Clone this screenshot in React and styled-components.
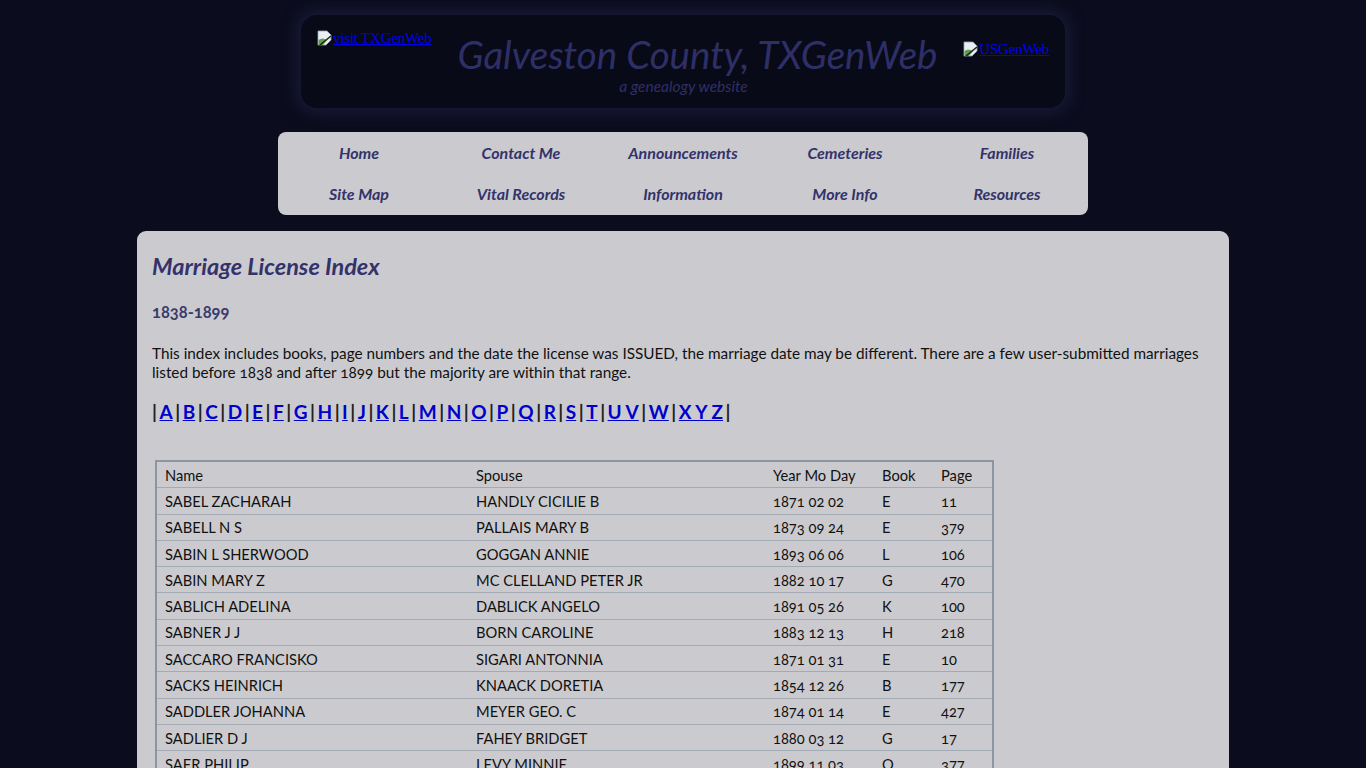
import React from 'react';
import styled, { createGlobalStyle } from 'styled-components';

const GlobalStyle = createGlobalStyle`
  body {
    margin: 0;
    background: #0b0c1d;
    font-family: Lato, "Open Sans", sans-serif;
    font-variant-numeric: oldstyle-nums;
  }
`;

const navItems = [
  'Home', 'Contact Me', 'Announcements', 'Cemeteries', 'Families',
  'Site Map', 'Vital Records', 'Information', 'More Info', 'Resources',
];

const letters = ['A', 'B', 'C', 'D', 'E', 'F', 'G', 'H', 'I', 'J', 'K', 'L', 'M', 'N', 'O', 'P', 'Q', 'R', 'S', 'T', 'U V', 'W', 'X Y Z'];

const rows = [
  ['SABEL ZACHARAH', 'HANDLY CICILIE B', '1871 02 02', 'E', '11'],
  ['SABELL N S', 'PALLAIS MARY B', '1873 09 24', 'E', '379'],
  ['SABIN L SHERWOOD', 'GOGGAN ANNIE', '1893 06 06', 'L', '106'],
  ['SABIN MARY Z', 'MC CLELLAND PETER JR', '1882 10 17', 'G', '470'],
  ['SABLICH ADELINA', 'DABLICK ANGELO', '1891 05 26', 'K', '100'],
  ['SABNER J J', 'BORN CAROLINE', '1883 12 13', 'H', '218'],
  ['SACCARO FRANCISKO', 'SIGARI ANTONNIA', '1871 01 31', 'E', '10'],
  ['SACKS HEINRICH', 'KNAACK DORETIA', '1854 12 26', 'B', '177'],
  ['SADDLER JOHANNA', 'MEYER GEO. C', '1874 01 14', 'E', '427'],
  ['SADLIER D J', 'FAHEY BRIDGET', '1880 03 12', 'G', '17'],
  ['SAER PHILIP', 'LEVY MINNIE', '1899 11 03', 'O', '377'],
  ['SAFFORD JAMES', 'BROWN MARY', '1885 04 20', 'I', '52'],
];

const Page = styled.div`
  display: flex;
  flex-direction: column;
  align-items: center;
  padding-top: 15px;
`;

const Header = styled.header`
  width: 764px;
  height: 93px;
  box-sizing: border-box;
  background: #090a17;
  border-radius: 16px;
  box-shadow: 0 0 14px 6px #181935;
  display: flex;
  align-items: flex-start;
  padding: 14px 16px 0 16px;
`;

const ImgLink = styled.a`
  display: inline-flex;
  align-items: flex-start;
  font-family: "Liberation Serif", serif;
  font-variant-numeric: normal;
  font-size: 15px;
  letter-spacing: -0.2px;
  color: #0000ee;
  text-decoration: underline;
  margin-top: ${(p) => p.$top}px;
  white-space: nowrap;
`;

const TitleBlock = styled.div`
  flex: 1;
  display: flex;
  flex-direction: column;
  align-items: center;
  color: #2f2f68;
  font-style: italic;
`;

const Title = styled.div`
  font-size: 38.5px;
  font-weight: 400;
  line-height: 46px;
  padding-top: 2px;
`;

const Subtitle = styled.div`
  font-size: 15.5px;
  line-height: 16px;
  margin-top: 1px;
  padding-right: 28px;
`;

const Nav = styled.nav`
  margin-top: 24px;
  width: 810px;
  height: 83px;
  box-sizing: border-box;
  background: #cbcbcf;
  border-radius: 8px;
  display: grid;
  grid-template-columns: repeat(5, 1fr);
  grid-template-rows: 41px 41px;
`;

const NavLink = styled.a`
  display: flex;
  align-items: center;
  justify-content: center;
  color: #33336b;
  font-weight: 700;
  font-style: italic;
  font-size: 16px;
  text-decoration: none;
`;

const Content = styled.main`
  margin-top: 16px;
  width: 1092px;
  box-sizing: border-box;
  background: #cbcbcf;
  border-radius: 9px;
  padding: 20px 15px 40px 15px;
  color: #111;
`;

const H2 = styled.h2`
  margin: 0;
  font-size: 23.5px;
  line-height: 30px;
  font-style: italic;
  font-weight: 700;
  color: #33336b;
`;

const H3 = styled.h3`
  margin: 20px 0 0 0;
  font-size: 16.5px;
  line-height: 22px;
  font-weight: 700;
  color: #3a3a6b;
`;

const Para = styled.p`
  margin: 21px 0 0 0;
  font-size: 15.3px;
  line-height: 19px;
`;

const Letters = styled.div`
  margin-top: 18px;
  font-size: 19px;
  line-height: 24px;
  font-weight: 700;
  color: #222;
  a {
    color: #0000cc;
    text-decoration: underline;
    padding: 0 2.5px;
  }
`;

const Table = styled.table`
  margin: 36px 0 0 3px;
  border-collapse: collapse;
  border: 2px solid #8a96a4;
  font-size: 14.7px;
  color: #111;
  td, th {
    text-align: left;
    font-weight: 400;
    padding: 0 8px;
    height: 25.3px;
    border-bottom: 1px solid #a2aab4;
  }
`;

const Col = styled.col`
  width: ${(p) => p.$w}px;
`;

const BrokenIcon = () => (
  <svg width="16" height="16" viewBox="0 0 16 16">
    <path d="M1 1h9l4 4v5L9 15H1z" fill="#e8eef2" stroke="#9aa4aa" strokeWidth="0.8" />
    <path d="M1.5 15 L1.5 10 Q5 7 10 10 L6 15z" fill="#5fa04a" />
    <path d="M3 15 L14 6" stroke="#222" strokeWidth="1.6" />
  </svg>
);

export default function App() {
  return (
    <>
      <GlobalStyle />
      <Page>
        <Header>
          <ImgLink href="#" $top={1}>
            <BrokenIcon />visit TXGenWeb
          </ImgLink>
          <TitleBlock>
            <Title>Galveston County, TXGenWeb</Title>
            <Subtitle>a genealogy website</Subtitle>
          </TitleBlock>
          <ImgLink href="#" $top={12}>
            <BrokenIcon />USGenWeb
          </ImgLink>
        </Header>
        <Nav>
          {navItems.map((n) => (
            <NavLink key={n} href="#">{n}</NavLink>
          ))}
        </Nav>
        <Content>
          <H2>Marriage License Index</H2>
          <H3>1838-1899</H3>
          <Para>
            This index includes books, page numbers and the date the license was ISSUED, the marriage date may be different. There are a few user-submitted marriages listed before 1838 and after 1899 but the majority are within that range.
          </Para>
          <Letters>
            |{letters.map((l) => (
              <React.Fragment key={l}>
                <a href="#">{l}</a>|
              </React.Fragment>
            ))}
          </Letters>
          <Table>
            <colgroup>
              <Col $w={312} />
              <Col $w={297} />
              <Col $w={109} />
              <Col $w={59} />
              <Col $w={60} />
            </colgroup>
            <thead>
              <tr>
                <th>Name</th>
                <th>Spouse</th>
                <th>Year Mo Day</th>
                <th>Book</th>
                <th>Page</th>
              </tr>
            </thead>
            <tbody>
              {rows.map((r) => (
                <tr key={r[0]}>
                  {r.map((c, i) => (
                    <td key={i}>{c}</td>
                  ))}
                </tr>
              ))}
            </tbody>
          </Table>
        </Content>
      </Page>
    </>
  );
}
